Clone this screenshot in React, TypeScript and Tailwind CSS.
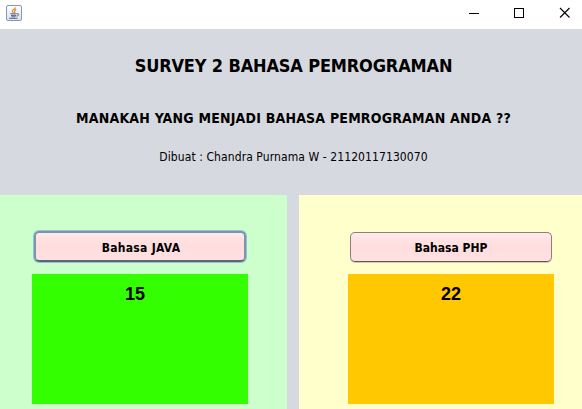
import React from "react";

const uiFont = "font-['DejaVu_Sans_Condensed','DejaVu_Sans',sans-serif] [font-stretch:condensed]";

function JavaIcon() {
  return (
    <svg width="16" height="16" viewBox="0 0 16 16" fill="none">
      <defs>
        <linearGradient id="plate" x1="0" y1="0" x2="0" y2="1">
          <stop offset="0" stopColor="#ffffff" />
          <stop offset="1" stopColor="#dbe2ec" />
        </linearGradient>
      </defs>
      <rect x="0.5" y="0.5" width="15" height="15" rx="1.5" fill="url(#plate)" stroke="#8299b0" />
      <path d="M9.6 2.6C9.6 4.2 5.9 4.6 6.3 6.4C6.5 7.1 7.2 7.4 7.4 8.2M10.2 4.6C8.8 5.2 8 5.9 8.7 6.8C9 7.3 8.9 7.7 8.5 8.2" stroke="#e8862a" strokeWidth="1.2" />
      <path d="M4.2 8.8H10.7M5 10.4H10.2M5.4 11.8H9.6M3.2 13.3H11.5" stroke="#4c6688" strokeWidth="1" />
      <path d="M10.9 8.8C13.6 8.2 13.2 10.8 10.6 11.2" stroke="#4c6688" strokeWidth="1" />
    </svg>
  );
}

function TitleBar() {
  return (
    <header className="flex h-[29px] items-start justify-between bg-white pl-1.5 pr-3">
      <div className="pt-[5px]">
        <JavaIcon />
      </div>
      <svg className="mt-[7px]" width="102" height="12" viewBox="0 0 102 12" fill="none" stroke="#000">
        <path d="M1 6.5H11" shapeRendering="crispEdges" />
        <rect x="46.5" y="1.5" width="9" height="9" shapeRendering="crispEdges" />
        <path d="M92 1L101.500 10.500M101.500 1L92 10.500" strokeWidth="1.1" />
      </svg>
    </header>
  );
}

export default function App() {
  return (
    <div className={`flex h-[409px] w-[582px] flex-col overflow-hidden bg-[#d6d9df] text-black ${uiFont}`}>
      <TitleBar />
      <section className="flex h-[166px] flex-col items-center whitespace-nowrap pl-[5px] pt-[25px]">
        <h1 className="text-[18px] font-bold leading-6 tracking-[-0.15px]">SURVEY 2 BAHASA PEMROGRAMAN</h1>
        <h2 className="mt-[30px] text-[14px] font-bold leading-5 tracking-[0.2px]">MANAKAH YANG MENJADI BAHASA PEMROGRAMAN ANDA ??</h2>
        <p className="mt-[19px] text-[12px] leading-5 tracking-[0.09px]">Dibuat : Chandra Purnama W - 21120117130070</p>
      </section>
      <main className="flex flex-1 gap-3">
        <section className="flex w-[287px] flex-col bg-[#ccffcc] pl-8 pt-9">
          <button className="ml-[2px] h-[31px] w-[212px] rounded-[5px] border-2 border-[#7f93ab] border-b-[#5a6779] bg-linear-to-b from-[#ffe9e9] via-[#ffdcdd] to-[#ffe1e1] pl-[2px] pt-[3px] text-[12px] font-bold tracking-[0.3px] shadow-[0_0_0_1px_#8fc4d8]">
            Bahasa JAVA
          </button>
          <div className="mt-3 h-[130px] w-[216px] bg-[#33ff00] pl-[93px] pt-2.5 font-['Liberation_Sans',sans-serif] text-[18px] font-bold leading-5">15</div>
        </section>
        <section className="flex w-[283px] flex-col bg-[#ffffcc] pl-[49px] pt-[37px]">
          <button className="ml-0.5 h-[30px] w-[202px] rounded-[5px] border border-[#8f7d80] border-b-[#625555] bg-linear-to-b from-[#ffe9e9] via-[#ffdcdd] to-[#ffe1e1] pt-px text-[12px] font-bold shadow-[0_1px_0_#d3cfae]">
            Bahasa PHP
          </button>
          <div className="mt-3 h-[130px] w-[206px] bg-[#ffc800] pl-[93px] pt-2.5 font-['Liberation_Sans',sans-serif] text-[18px] font-bold leading-5">22</div>
        </section>
      </main>
    </div>
  );
}
